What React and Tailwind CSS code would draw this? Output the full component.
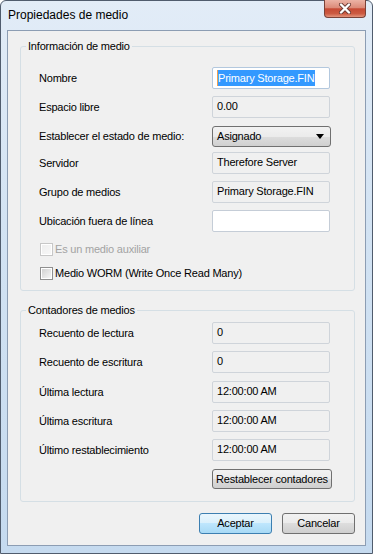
import React from 'react'

const btnGrad = 'bg-[linear-gradient(#f2f2f2_0%,#ebebeb_50%,#dddddd_50%,#cfcfcf_100%)]'

function Row({ label, children, mt }) {
  return (
    <div className={`flex items-center h-[22px] ${mt}`}>
      <div className="w-[173px] shrink-0">{label}</div>
      {children}
    </div>
  )
}

function ReadOnly({ value }) {
  return (
    <div className="w-[118px] h-[22px] border border-[#cfd4da] rounded-[2px] bg-[#f0f0f0] flex items-center pl-[4px] pb-[1px]">
      {value}
    </div>
  )
}

function Checkbox({ label, disabled, mt }) {
  return (
    <div className={`flex items-center h-[13px] pl-[1px] ${mt}`}>
      <div
        className={`w-[13px] h-[13px] border p-[1px] bg-white ${
          disabled ? 'border-[#c7c7c7]' : 'border-[#8f8f8f]'
        }`}
      >
        <div
          className={`w-full h-full bg-gradient-to-br ${
            disabled ? 'from-[#eeeeee] to-[#f7f7f7]' : 'from-[#d2d2d2] to-[#f6f6f6]'
          }`}
        />
      </div>
      <span className={`ml-[2px] ${disabled ? 'text-[#a3a3a3]' : 'text-black'}`}>{label}</span>
    </div>
  )
}

function GroupBox({ title, height, mt, children }) {
  return (
    <div className={`ml-[12px] w-[335px] ${height} ${mt} border border-[#d5dfe5] rounded-[3px]`}>
      <div className="-mt-[7px] ml-[5px] h-[13px] leading-[13px] px-[2px] bg-[#f0f0f0] w-fit">{title}</div>
      <div className="pl-[18px]">{children}</div>
    </div>
  )
}

export default function App() {
  return (
    <div className="w-[373px] h-[554px] bg-white font-['Liberation_Sans',Arial,sans-serif] text-[11px] text-black">
      <div className="w-[373px] h-[554px] rounded-t-[6px] border border-[#505c6d] bg-[linear-gradient(#e2ecf7_0%,#d3e3f3_40%,#c5daef_100%)] flex flex-col">
        {/* title bar */}
        <div className="h-[29px] flex items-start justify-between shrink-0">
          <div className="pl-[7px] pt-[6px] text-[12px] leading-[16px]">Propiedades de medio</div>
          <div className="mr-[6px] -mt-[1px] w-[42px] h-[18px] rounded-b-[4px] border border-[#7a4238] border-t-0 bg-[linear-gradient(#ecb3a5_0%,#dc8b79_45%,#c64a34_52%,#cc5a41_80%,#e3947c_100%)] flex items-center justify-center">
            <svg width="14" height="11" viewBox="0 0 14 11">
              <path d="M3 1.5 L11 9.5 M11 1.5 L3 9.5" stroke="#6a3a33" strokeWidth="4" strokeLinecap="round" />
              <path d="M3 1.5 L11 9.5 M11 1.5 L3 9.5" stroke="#ffffff" strokeWidth="2.4" strokeLinecap="round" />
            </svg>
          </div>
        </div>

        {/* client area */}
        <div className="mx-[6px] h-[516px] shrink-0 border border-[#8c9db3] bg-[#f0f0f0] flex flex-col tracking-[-0.2px]">
          <GroupBox title="Información de medio" height="h-[245px]" mt="mt-[15px]">
            <Row label="Nombre" mt="mt-[14px]">
              <div className="w-[118px] h-[22px] border border-[#b3c8de] rounded-[2px] bg-white flex items-center pl-[4px]">
                <span className="bg-[#3399ff] text-white leading-[16px] border-l border-[#f0a050] pr-[1px]">
                  Primary Storage.FIN
                </span>
              </div>
            </Row>
            <Row label="Espacio libre" mt="mt-[7px]">
              <ReadOnly value="0.00" />
            </Row>
            <div className="flex items-center h-[21px] mt-[8px]">
              <div className="w-[173px] shrink-0">Establecer el estado de medio:</div>
              <div className={`w-[119px] h-[21px] border border-[#707070] rounded-[3px] ${btnGrad} flex items-center justify-between pl-[4px] pr-[6px]`}>
                <span>Asignado</span>
                <svg width="8" height="5" viewBox="0 0 8 5">
                  <path d="M0 0 H8 L4 5 Z" fill="#000" />
                </svg>
              </div>
            </div>
            <Row label="Servidor" mt="mt-[5px]">
              <ReadOnly value="Therefore Server" />
            </Row>
            <Row label="Grupo de medios" mt="mt-[7px]">
              <ReadOnly value="Primary Storage.FIN" />
            </Row>
            <Row label="Ubicación fuera de línea" mt="mt-[7px]">
              <div className="w-[118px] h-[22px] border border-[#c5cdd7] rounded-[2px] bg-white" />
            </Row>
            <Checkbox label="Es un medio auxiliar" disabled mt="mt-[11px]" />
            <Checkbox label="Medio WORM (Write Once Read Many)" mt="mt-[11px]" />
          </GroupBox>

          <GroupBox title="Contadores de medios" height="h-[192px]" mt="mt-[19px]">
            <Row label="Recuento de lectura" mt="mt-[5px]">
              <ReadOnly value="0" />
            </Row>
            <Row label="Recuento de escritura" mt="mt-[7px]">
              <ReadOnly value="0" />
            </Row>
            <Row label="Última lectura" mt="mt-[8px]">
              <ReadOnly value="12:00:00 AM" />
            </Row>
            <Row label="Última escritura" mt="mt-[7px]">
              <ReadOnly value="12:00:00 AM" />
            </Row>
            <Row label="Último restablecimiento" mt="mt-[7px]">
              <ReadOnly value="12:00:00 AM" />
            </Row>
            <div className="flex mt-[8px]">
              <div className="w-[173px] shrink-0" />
              <button className={`w-[120px] h-[20px] border border-[#707070] rounded-[3px] ${btnGrad} flex items-center justify-center`}>
                Restablecer contadores
              </button>
            </div>
          </GroupBox>

          <div className="flex justify-end gap-[10px] mt-[11px] pr-[10px]">
            <button className="w-[73px] h-[21px] border border-[#3c7fb1] rounded-[3px] bg-[linear-gradient(#eaf6fd_0%,#d9f0fc_50%,#bee6fd_50%,#a7d9f5_100%)] flex items-center justify-center">
              Aceptar
            </button>
            <button className={`w-[73px] h-[21px] border border-[#707070] rounded-[3px] ${btnGrad} flex items-center justify-center`}>
              Cancelar
            </button>
          </div>
        </div>
      </div>
    </div>
  )
}
